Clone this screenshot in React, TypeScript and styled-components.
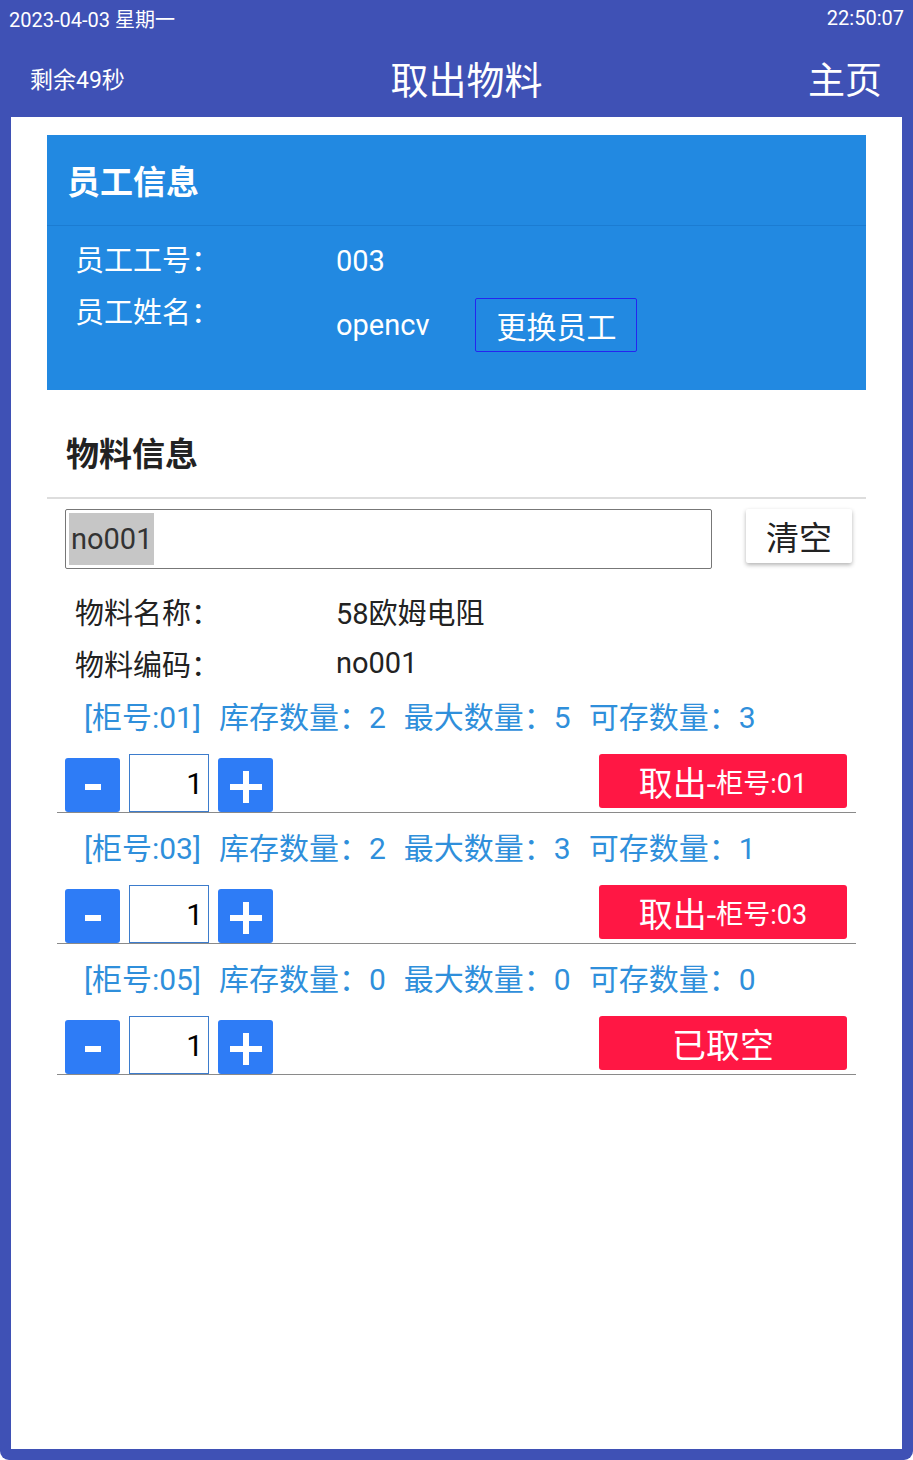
import styled, { createGlobalStyle } from "styled-components";

type Cabinet = {
    no: string;
    stock: number;
    max: number;
    qty: number;
}

const cabinets: Cabinet[] = [
    { no: '01', stock: 2, max: 5, qty: 1 },
    { no: '03', stock: 2, max: 3, qty: 1 },
    { no: '05', stock: 0, max: 0, qty: 1 },
];

const GlobalStyle = createGlobalStyle`
    html, body {
        margin: 0;
        padding: 0;
        background: #ffffff;
        font-family: Roboto, "Noto Sans CJK SC", sans-serif;
    }
    * {
        box-sizing: border-box;
    }
`;

const CabinetBlock = ({ cab }: { cab: Cabinet }) => {
    const empty = cab.stock === 0;
    return (
        <Block>
            <StockLine>
                <StockItem>[柜号:{cab.no}]</StockItem>
                <StockItem>库存数量：{cab.stock}</StockItem>
                <StockItem>最大数量：{cab.max}</StockItem>
                <StockItem>可存数量：{cab.max - cab.stock}</StockItem>
            </StockLine>
            <Controls>
                <Stepper>
                    <StepButton>
                        <svg width="16" height="6" viewBox="0 0 16 6">
                            <rect x="0" y="0" width="16" height="6" fill="#fff" />
                        </svg>
                    </StepButton>
                    <QtyInput>{cab.qty}</QtyInput>
                    <StepButton>
                        <svg width="32" height="32" viewBox="0 0 32 32">
                            <rect x="13" y="0" width="6" height="32" fill="#fff" />
                            <rect x="0" y="13" width="32" height="6" fill="#fff" />
                        </svg>
                    </StepButton>
                </Stepper>
                <TakeButton>
                    {empty ? '已取空' : <>取出-<Small>柜号:{cab.no}</Small></>}
                </TakeButton>
            </Controls>
        </Block>
    );
}

export default function App() {
    return (
        <>
            <GlobalStyle />
            <Frame>
                <TopBar>
                    <span>2023-04-03 星期一</span>
                    <span>22:50:07</span>
                </TopBar>
                <Header>
                    <Countdown>剩余49秒</Countdown>
                    <Title>取出物料</Title>
                    <HomeLink>主页</HomeLink>
                </Header>
                <Content>
                    <EmployeeCard>
                        <CardTitle>员工信息</CardTitle>
                        <CardBody>
                            <InfoRow>
                                <Label>员工工号：</Label>
                                <Value>003</Value>
                            </InfoRow>
                            <InfoRow>
                                <Label>员工姓名：</Label>
                                <NameBox>
                                    <Value>opencv</Value>
                                    <SwitchButton>更换员工</SwitchButton>
                                </NameBox>
                            </InfoRow>
                        </CardBody>
                    </EmployeeCard>

                    <SectionTitle>物料信息</SectionTitle>
                    <SearchRow>
                        <Field><Selected>no001</Selected></Field>
                        <ClearButton>清空</ClearButton>
                    </SearchRow>
                    <Material>
                        <MatRow>
                            <MatLabel>物料名称：</MatLabel>
                            <span>58欧姆电阻</span>
                        </MatRow>
                        <MatRow>
                            <MatLabel>物料编码：</MatLabel>
                            <span>no001</span>
                        </MatRow>
                    </Material>
                    <CabinetList>
                        {cabinets.map((c) => <CabinetBlock key={c.no} cab={c} />)}
                    </CabinetList>
                </Content>
            </Frame>
        </>
    );
}

const Frame = styled.div`
    display: flex;
    flex-direction: column;
    height: 1460px;
    background: #3f51b5;
    border-radius: 0 0 9px 9px;
    padding: 0 11px 11px;
`;

const TopBar = styled.div`
    height: 40px;
    display: flex;
    justify-content: space-between;
    align-items: center;
    margin: -2px -2px 0 -2px;
    color: #ffffff;
    font-size: 20px;
`;

const Header = styled.div`
    height: 79px;
    display: flex;
    justify-content: space-between;
    align-items: center;
    padding: 0 20px 0 19px;
    color: #ffffff;
`;

const Countdown = styled.div`
    font-size: 23px;
    white-space: nowrap;
`;

const Title = styled.div`
    font-size: 38px;
`;

const HomeLink = styled.div`
    font-size: 37px;
`;

const Content = styled.div`
    flex: 1;
    background: #ffffff;
    padding: 18px 36px 0;
`;

const EmployeeCard = styled.div`
    height: 255px;
    background: #2289e1;
    color: #ffffff;
`;

const CardTitle = styled.div`
    height: 91px;
    display: flex;
    align-items: center;
    padding: 0 0 0 20px;
    font-size: 33px;
    font-weight: bold;
    border-bottom: 1px solid #1b7cd2;
`;

const CardBody = styled.div`
    padding: 9px 0 0 28px;
`;

const InfoRow = styled.div`
    display: flex;
    align-items: flex-start;
    font-size: 29px;
    line-height: 52px;
`;

const Label = styled.div`
    width: 261px;
`;

const Value = styled.span`
    font-size: 29px;
`;

const NameBox = styled.div`
    display: flex;
    align-items: center;
    gap: 46px;
    margin-top: 11px;
`;

const SwitchButton = styled.button`
    height: 54px;
    width: 162px;
    background: transparent;
    border: 1px solid #2525f0;
    border-radius: 2px;
    color: #ffffff;
    font-family: inherit;
    font-size: 30px;
    padding: 0;
`;

const SectionTitle = styled.div`
    padding: 40px 0 17px 19px;
    line-height: 50px;
    font-size: 33px;
    font-weight: bold;
    color: #222222;
    border-bottom: 2px solid #dddddd;
`;

const SearchRow = styled.div`
    display: flex;
    align-items: flex-start;
    justify-content: space-between;
    padding: 10px 14px 0 18px;
`;

const Field = styled.div`
    width: 647px;
    height: 60px;
    border: 1px solid #777777;
    border-radius: 2px;
    display: flex;
    align-items: center;
    padding: 0 3px;
`;

const Selected = styled.span`
    background: #c6c6c6;
    color: #333333;
    font-size: 29px;
    line-height: 52px;
    padding: 0 2px;
`;

const ClearButton = styled.button`
    width: 106px;
    height: 54px;
    background: #ffffff;
    border: none;
    border-radius: 2px;
    box-shadow: 0 2px 4px rgba(0, 0, 0, 0.3);
    font-family: inherit;
    font-size: 33px;
    color: #222222;
    padding: 0;
`;

const Material = styled.div`
    display: flex;
    flex-direction: column;
    gap: 12px;
    margin-top: 22px;
    padding-left: 28px;
    color: #222222;
    font-size: 29px;
`;

const MatRow = styled.div`
    display: flex;
    align-items: center;
    height: 40px;
`;

const MatLabel = styled.span`
    width: 261px;
`;

const CabinetList = styled.div`
    margin: -1px 10px 0;
`;

const Block = styled.div`
    border-bottom: 1px solid #8a8a8a;
`;

const StockLine = styled.div`
    height: 72px;
    display: flex;
    align-items: center;
    padding: 0 0 6px 27px;
    color: #2f8fdb;
    font-size: 30px;
`;

const StockItem = styled.span`
    margin-right: 18px;
`;

const Controls = styled.div`
    display: flex;
    justify-content: space-between;
    align-items: flex-start;
    height: 58px;
    padding: 0 9px 0 8px;
`;

const Stepper = styled.div`
    display: flex;
    align-items: flex-end;
    gap: 9px;
    height: 58px;
`;

const StepButton = styled.div`
    width: 55px;
    height: 54px;
    background: #2e7cf6;
    border-radius: 3px;
    display: flex;
    align-items: center;
    justify-content: center;

    svg {
        margin-top: 4px;
    }
`;

const QtyInput = styled.div`
    width: 80px;
    height: 58px;
    border: 1px solid #3d7ccc;
    display: flex;
    align-items: center;
    justify-content: flex-end;
    padding-right: 5px;
    font-size: 30px;
    color: #000000;
`;

const TakeButton = styled.div`
    width: 248px;
    height: 54px;
    background: #ff1744;
    border-radius: 3px;
    color: #ffffff;
    font-size: 34px;
    display: flex;
    align-items: center;
    justify-content: center;
`;

const Small = styled.span`
    font-size: 27px;
`;
